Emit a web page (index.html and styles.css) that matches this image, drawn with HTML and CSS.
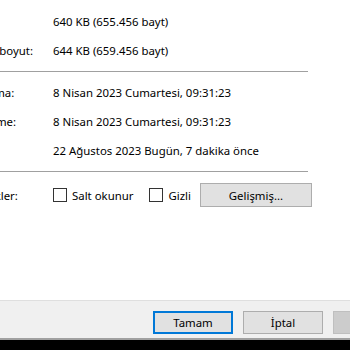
FILE: index.html
```html
<!DOCTYPE html>
<html lang="tr">
<head>
    <meta charset="utf-8">
    <link rel="stylesheet" href="styles.css">
</head>
<body>
    <div class="dialog">
        <div class="props">
            <div class="row"><span class="label">Boyut:</span><span class="value">640 KB (655.456 bayt)</span></div>
            <div class="row"><span class="label">Diskteki boyut:</span><span class="value">644 KB (659.456 bayt)</span></div>
            <hr class="sep">
            <div class="row"><span class="label">Oluşturma:</span><span class="value">8 Nisan 2023 Cumartesi, 09:31:23</span></div>
            <div class="row"><span class="label">Değiştirme:</span><span class="value">8 Nisan 2023 Cumartesi, 09:31:23</span></div>
            <div class="row"><span class="label">Erişim:</span><span class="value">22 Ağustos 2023 Bugün, 7 dakika önce</span></div>
            <hr class="sep">
            <div class="row attrs">
                <span class="label">Öznitelikler:</span>
                <div class="value checks">
                    <label class="check readonly"><span class="box"></span>Salt okunur</label>
                    <label class="check"><span class="box"></span>Gizli</label>
                    <button class="btn wide">Gelişmiş...</button>
                </div>
            </div>
        </div>
        <div class="footer">
            <button class="btn default">Tamam</button>
            <button class="btn">İptal</button>
            <button class="btn disabled">Uygula</button>
        </div>
    </div>
    <div class="taskbar"></div>
</body>
</html>
```

FILE: styles.css
```css
html, body {
    margin: 0;
    padding: 0;
}

body {
    width: 350px;
    height: 350px;
    overflow: hidden;
    background: #ffffff;
    color: #000000;
    font-family: "Noto Sans", "Open Sans", sans-serif;
    font-size: 11.4px;
}

.dialog {
    display: flex;
    flex-direction: column;
    height: 340px;
}

.props {
    flex: 1;
    padding-top: 7px;
    margin-left: -46px;
}

.row {
    display: grid;
    grid-template-columns: 99px 1fr;
    align-items: center;
    height: 29px;
    white-space: nowrap;
}

.sep {
    margin: 6px 0 6px 0;
    width: 354px;
    height: 0;
    border: 0;
    border-top: 1px solid #a0a0a0;
}

.attrs {
    height: 34px;
}

.checks {
    display: flex;
    align-items: center;
}

.check {
    display: flex;
    align-items: center;
    margin-right: 9px;
}

.readonly {
    margin-right: 16px;
}

.box {
    width: 12px;
    height: 12px;
    border: 1px solid #333333;
    background: #ffffff;
    margin-right: 5px;
}

.btn {
    font-family: inherit;
    font-size: 11.4px;
    color: #000000;
    background: #e1e1e1;
    border: 1px solid #adadad;
    width: 80px;
    height: 23px;
    padding: 0;
    flex: none;
}

.wide {
    width: 112px;
    height: 24px;
}

.footer {
    display: flex;
    height: 40px;
    box-sizing: border-box;
    padding: 10px 0 0 153px;
    gap: 10px;
    background: #f0f0f0;
    border-top: 1px solid #dfdfdf;
    border-bottom: 2px solid #a0a0a0;
}

.default {
    border: 2px solid #0078d7;
}

.disabled {
    background: #cccccc;
    border-color: #bfbfbf;
    color: #838383;
}

.taskbar {
    height: 10px;
    background: #000000;
}
```
